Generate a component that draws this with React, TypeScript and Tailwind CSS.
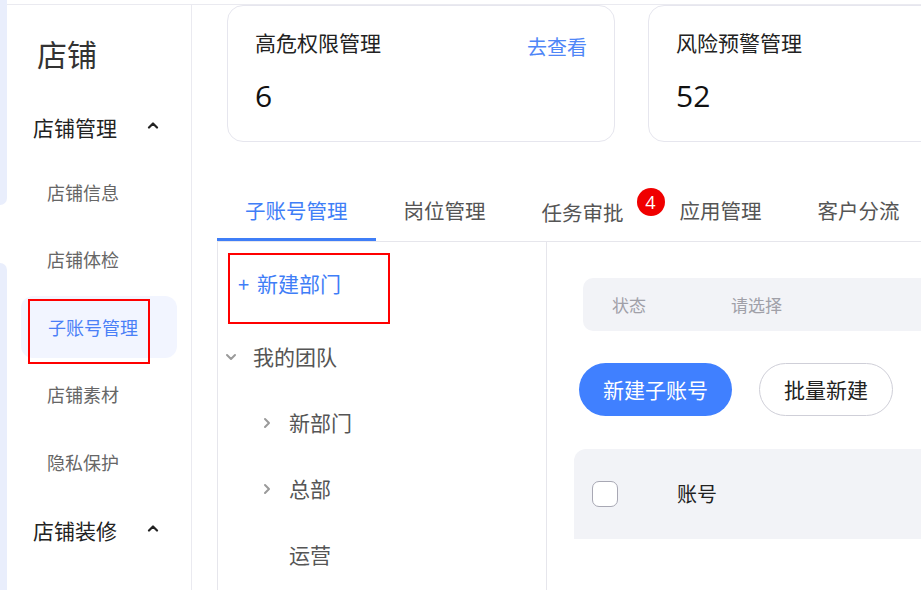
import React from "react";

const F = { fontFamily: '"Noto Sans CJK SC", "Noto Sans", sans-serif' };

function ChevronUp() {
  return (
    <svg width="12" height="8" viewBox="0 0 12 8" className="text-[#222]">
      <polyline points="2,6.5 6,2.5 10,6.5" fill="none" stroke="currentColor" strokeWidth="2.2" strokeLinecap="round" strokeLinejoin="round" />
    </svg>
  );
}

function ChevronDown() {
  return (
    <svg width="12" height="8" viewBox="0 0 12 8">
      <polyline points="2,2 6,6 10,2" fill="none" stroke="#9a9a9a" strokeWidth="2" strokeLinecap="round" strokeLinejoin="round" />
    </svg>
  );
}

function ChevronRight() {
  return (
    <svg width="8" height="12" viewBox="0 0 8 12">
      <polyline points="2,2 6,6 2,10" fill="none" stroke="#9a9a9a" strokeWidth="2" strokeLinecap="round" strokeLinejoin="round" />
    </svg>
  );
}

function SubItem({ label, active }: { label: string; active?: boolean }) {
  if (active) {
    return (
      <div className="relative h-[62px] mx-[14px] rounded-[12px] bg-[#f2f5ff] flex items-center pl-[27px] text-[18px] text-[#4a7ff7]">
        {label}
        <div className="absolute left-[7px] top-[3px] w-[122px] h-[65px] border-2 border-[#ff0000]" />
      </div>
    );
  }
  return <div className="h-[62px] flex items-center pl-[40px] text-[18px] text-[#666]">{label}</div>;
}

function Card({ title, value, link }: { title: string; value: string; link?: boolean }) {
  return (
    <div className="w-[388px] h-[137px] shrink-0 rounded-[16px] border border-[#e6e6ee] bg-white pl-[27px] pr-[27px] pt-[21px]">
      <div className="relative h-[30px]">
        <div className="text-[21px] leading-[30px] text-[#222]">{title}</div>
        {link && <div className="absolute right-0 top-[5px] text-[20px] leading-[30px] text-[#4f86f7]">去查看</div>}
      </div>
      <div className="text-[30px] leading-[40px] mt-[19px] text-[#111]" style={{ fontFamily: '"Open Sans", "Noto Sans", sans-serif' }}>
        {value}
      </div>
    </div>
  );
}

function Tab({ label, active, badge, lower }: { label: string; active?: boolean; badge?: string; lower?: boolean }) {
  return (
    <div className={"relative px-[28px] pb-[14px] " + (active ? "border-b-[3px] border-[#3f7ef7] text-[#3f7ef7]" : "border-b-[3px] border-transparent text-[#555]")}>
      <div className={"text-[20.5px] leading-[28px] " + (lower ? "translate-y-[2px]" : "")}>{label}</div>
      {badge && (
        <div className="absolute right-[-13px] top-[-8px] w-[28px] h-[28px] rounded-full bg-[#f00000] text-white text-[18px] leading-[28px] text-center" style={{ fontFamily: '"Open Sans", sans-serif' }}>
          {badge}
        </div>
      )}
    </div>
  );
}

export default function App() {
  return (
    <div className="w-[921px] h-[590px] overflow-hidden bg-white flex" style={F}>
      {/* left strip */}
      <div className="w-[7px] shrink-0 flex flex-col">
        <div className="h-[205px] bg-[#e9eefc] rounded-br-[8px]" />
        <div className="h-[58px]" />
        <div className="flex-1 bg-[#e9eefc] rounded-tr-[8px]" />
      </div>

      <div className="flex-1 flex flex-col">
        <div className="h-[4px] shrink-0" />
        <div className="flex-1 flex border-t border-[#eaeaf0]">
          {/* sidebar */}
          <div className="w-[185px] shrink-0 border-r border-[#eaeaf0] flex flex-col">
            <div className="h-[96px] flex items-center pl-[30px] text-[30px] text-[#333]">店铺</div>
            <div className="mt-[4px] h-[46px] flex items-center pl-[26px] pr-[32px] justify-between text-[21px] text-[#222]">
              <span>店铺管理</span>
              <span className="-translate-y-[3px]"><ChevronUp /></span>
            </div>
            <div className="mt-[10px] flex flex-col gap-[5.5px]">
              <SubItem label="店铺信息" />
              <SubItem label="店铺体检" />
              <SubItem label="子账号管理" active />
              <SubItem label="店铺素材" />
              <SubItem label="隐私保护" />
            </div>
            <div className="mt-[15px] h-[46px] flex items-center pl-[26px] pr-[32px] justify-between text-[21px] text-[#222]">
              <span>店铺装修</span>
              <span className="-translate-y-[3px]"><ChevronUp /></span>
            </div>
          </div>

          {/* content */}
          <div className="flex-1 flex flex-col min-w-0">
            <div className="flex gap-[33px] pl-[35px]">
              <Card title="高危权限管理" value="6" link />
              <Card title="风险预警管理" value="52" />
            </div>

            <div className="ml-[25px] mt-[54px] flex border-b border-[#e6e6ec]">
              <Tab label="子账号管理" active />
              <Tab label="岗位管理" />
              <Tab label="任务审批" badge="4" lower />
              <Tab label="应用管理" />
              <Tab label="客户分流" />
            </div>

            <div className="ml-[25px] flex-1 flex">
              {/* tree */}
              <div className="w-[330px] shrink-0 border-l border-r border-[#e6e6ec] flex flex-col">
                <div className="relative mt-[9px] h-[66px] flex items-center pl-[20px] text-[21px] text-[#3f7ef7]">
                  <span className="text-[20px] mr-[8px]">+</span>
                  <span>新建部门</span>
                  <div className="absolute left-[10px] top-[2px] w-[162px] h-[71px] border-2 border-[#ff0000]" />
                </div>
                <div className="mt-[7px] h-[66px] flex items-center pl-[7px] text-[21px] text-[#555]">
                  <ChevronDown />
                  <span className="ml-[16px]">我的团队</span>
                </div>
                <div className="h-[66px] flex items-center pl-[45px] text-[21px] text-[#555]">
                  <ChevronRight />
                  <span className="ml-[18px]">新部门</span>
                </div>
                <div className="h-[66px] flex items-center pl-[45px] text-[21px] text-[#555]">
                  <ChevronRight />
                  <span className="ml-[18px]">总部</span>
                </div>
                <div className="h-[66px] flex items-center pl-[71px] text-[21px] text-[#555]">
                  <span>运营</span>
                </div>
              </div>

              {/* right panel */}
              <div className="flex-1 flex flex-col min-w-0">
                <div className="ml-[36px] mt-[36px] h-[53px] rounded-l-[10px] bg-[#f2f3f7] flex items-center pl-[29px] text-[17px] text-[#a0a0a8]">
                  <span>状态</span>
                  <span className="ml-[85px]">请选择</span>
                </div>
                <div className="ml-[32px] mt-[32px] flex gap-[27px]">
                  <div className="w-[153px] h-[53px] rounded-full bg-[#4080ff] text-white text-[21px] flex items-center justify-center">新建子账号</div>
                  <div className="w-[134px] h-[53px] rounded-full border border-[#cfcfd8] text-[#222] text-[21px] flex items-center justify-center">批量新建</div>
                </div>
                <div className="ml-[27px] mt-[33px] h-[90px] rounded-tl-[12px] bg-[#f2f3f7] flex items-center pl-[18px]">
                  <div className="w-[26px] h-[26px] rounded-[7px] border border-[#a8a8b4] bg-white" />
                  <span className="ml-[59px] text-[20px] text-[#222]">账号</span>
                </div>
              </div>
            </div>
          </div>
        </div>
      </div>
    </div>
  );
}
